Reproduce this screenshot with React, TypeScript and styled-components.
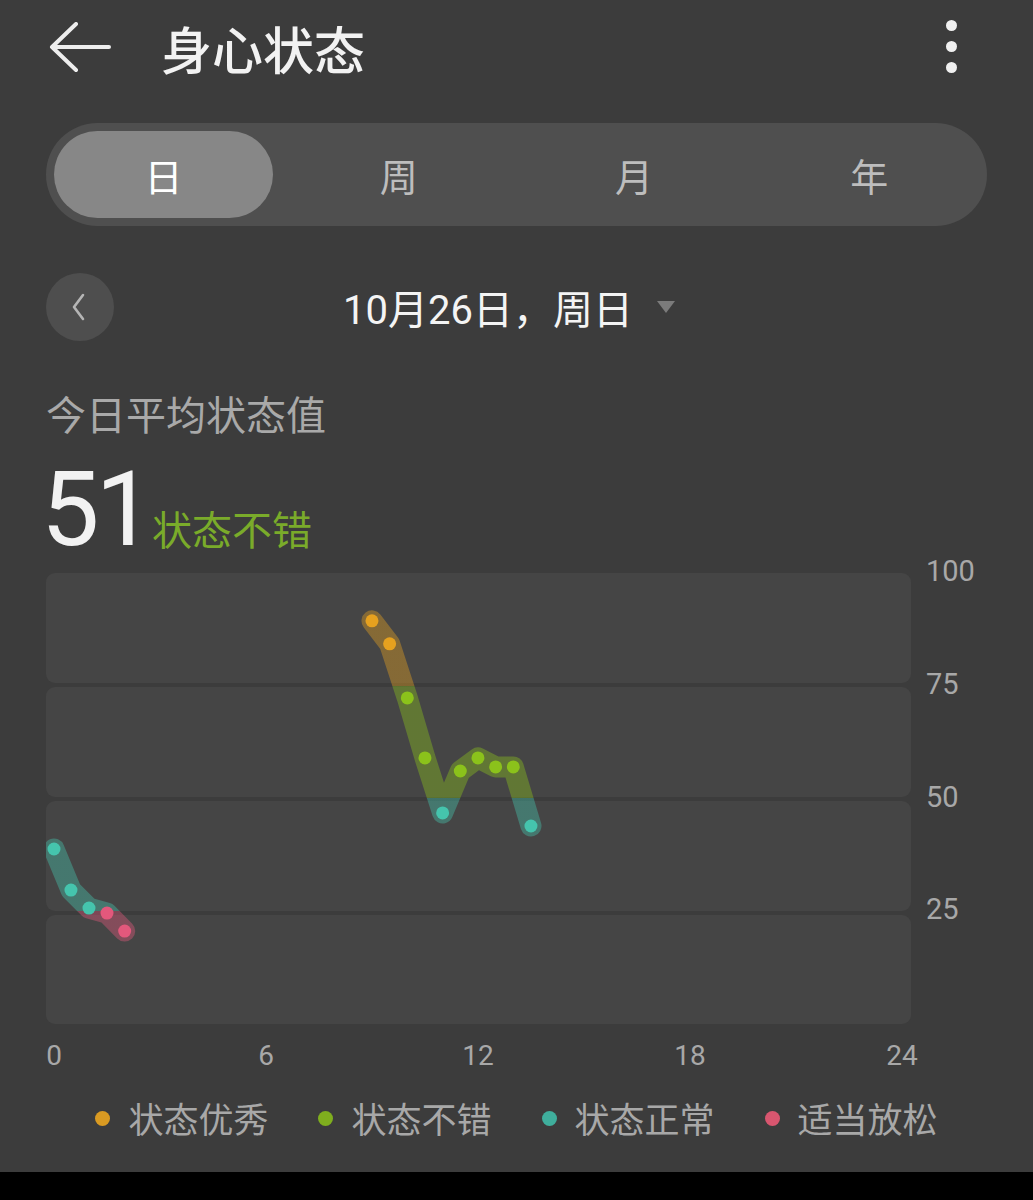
import React from "react";
import styled, { createGlobalStyle } from "styled-components";

type Point = [number, number];

const GlobalStyle = createGlobalStyle`
  html, body {
    margin: 0;
    padding: 0;
    background: #000;
  }
`;

const tabs = ["日", "周", "月", "年"];

const legend = [
  { label: "状态优秀", color: "#d99a22" },
  { label: "状态不错", color: "#7fae1e" },
  { label: "状态正常", color: "#3fae9c" },
  { label: "适当放松", color: "#d8566f" },
];

const dotColors = ["#e6a11f", "#8bc21b", "#45c4ad", "#e3587c"];

const morning: Point[] = [
  [0, 38.8],
  [0.48, 29.7],
  [0.99, 25.7],
  [1.5, 24.6],
  [2.0, 20.6],
];

const noon: Point[] = [
  [9, 89.4],
  [9.5, 84.3],
  [10, 72.3],
  [10.5, 59],
  [11, 46.8],
  [11.5, 56.1],
  [12, 59],
  [12.5, 57],
  [13, 57],
  [13.5, 43.9],
];

const W = 865;
const H = 451;
const toX = (h: number) => 8 + h * 35.33;
const toY = (v: number) => (100 - v) * (H / 100);

const colorFor = (v: number) => {
  if (v >= 75) return dotColors[0];
  if (v >= 50) return dotColors[1];
  if (v >= 25) return dotColors[2];
  return dotColors[3];
};

const pathOf = (pts: Point[]) =>
  pts.map(([h, v], i) => `${i ? "L" : "M"}${toX(h).toFixed(1)} ${toY(v).toFixed(1)}`).join(" ");

const bands = [0, 1, 2, 3].map((i) => ({ y: i * 114, h: i === 3 ? H - 342 : 110 }));

const Chart = () => (
  <svg width={W} height={H} viewBox={`0 0 ${W} ${H}`}>
    <defs>
      <linearGradient id="lvl" gradientUnits="userSpaceOnUse" x1="0" y1="0" x2="0" y2={H}>
        <stop offset="0.25" stopColor={dotColors[0]} />
        <stop offset="0.25" stopColor={dotColors[1]} />
        <stop offset="0.5" stopColor={dotColors[1]} />
        <stop offset="0.5" stopColor={dotColors[2]} />
        <stop offset="0.75" stopColor={dotColors[2]} />
        <stop offset="0.75" stopColor={dotColors[3]} />
      </linearGradient>
    </defs>
    {bands.map((b) => (
      <rect key={b.y} x={0} y={b.y} width={W} height={b.h} rx={9} fill="#454545" />
    ))}
    {[morning, noon].map((seg, i) => (
      <g key={i}>
        <path
          d={pathOf(seg)}
          fill="none"
          stroke="url(#lvl)"
          strokeOpacity={0.4}
          strokeWidth={21}
          strokeLinecap="round"
          strokeLinejoin="round"
        />
        {seg.map(([h, v]) => (
          <circle key={h} cx={toX(h)} cy={toY(v)} r={6.5} fill={colorFor(v)} />
        ))}
      </g>
    ))}
  </svg>
);

const App: React.FC = () => (
  <Page>
    <GlobalStyle />
    <Header>
      <svg width="62" height="52" viewBox="0 0 62 52">
        <path d="M60 25 H3 M27 2 L3 25 L27 48" fill="none" stroke="#eeeeee" strokeWidth="4" strokeLinecap="round" strokeLinejoin="round" />
      </svg>
      <Title>身心状态</Title>
      <More>
        <i />
        <i />
        <i />
      </More>
    </Header>

    <Segmented>
      {tabs.map((t, i) => (
        <Tab key={t}>
          <TabPill $active={i === 0}>{t}</TabPill>
        </Tab>
      ))}
    </Segmented>

    <DateRow>
      <RoundButton>
        <svg width="20" height="30" viewBox="0 0 20 30">
          <path d="M14 3 L5 15 L14 27" fill="none" stroke="#b5b5b5" strokeWidth="2.6" strokeLinecap="round" strokeLinejoin="round" />
        </svg>
      </RoundButton>
      <DateText>10月26日，周日</DateText>
      <Caret />
    </DateRow>

    <Caption>今日平均状态值</Caption>
    <ScoreRow>
      <Score>51</Score>
      <ScoreLabel>状态不错</ScoreLabel>
    </ScoreRow>

    <ChartGrid>
      <Chart />
      <YAxis>
        {["100", "75", "50", "25"].map((t) => (
          <YTick key={t}>
            <span>{t}</span>
          </YTick>
        ))}
      </YAxis>
      <XAxis>
        {["0", "6", "12", "18", "24"].map((t) => (
          <XTick key={t}>{t}</XTick>
        ))}
      </XAxis>
    </ChartGrid>

    <Legend>
      {legend.map((l) => (
        <LegendItem key={l.label}>
          <LegendDot $color={l.color} />
          {l.label}
        </LegendItem>
      ))}
    </Legend>
  </Page>
);

const Page = styled.div`
  width: 1033px;
  height: 1172px;
  box-sizing: border-box;
  padding: 0 46px;
  background: #3c3c3c;
  display: flex;
  flex-direction: column;
  font-family: Roboto, "Noto Sans CJK SC", sans-serif;
  overflow: hidden;
`;

const Header = styled.div`
  height: 96px;
  display: flex;
  align-items: center;
  padding-left: 3px;
`;

const Title = styled.h1`
  margin: 0 0 0 50px;
  font-size: 51px;
  font-weight: 500;
  color: #f2f2f2;
  font-family: "Noto Sans CJK SC", sans-serif;
  line-height: 1;
`;

const More = styled.div`
  margin-left: auto;
  margin-right: 30px;
  display: flex;
  flex-direction: column;
  gap: 10px;
  margin-top: -4px;

  i {
    width: 11px;
    height: 11px;
    border-radius: 50%;
    background: #f0f0f0;
  }
`;

const Segmented = styled.div`
  margin-top: 27px;
  height: 103px;
  border-radius: 52px;
  background: #4f4f4f;
  display: grid;
  grid-template-columns: repeat(4, 1fr);
`;

const Tab = styled.div`
  padding: 8px;
  display: flex;
`;

const TabPill = styled.div<{ $active?: boolean }>`
  flex: 1;
  border-radius: 44px;
  display: flex;
  align-items: center;
  justify-content: center;
  font-family: "Noto Sans CJK SC", sans-serif;
  font-size: 38px;
  color: ${(p) => (p.$active ? "#ffffff" : "#bdbdbd")};
  background: ${(p) => (p.$active ? "#878787" : "transparent")};
`;

const DateRow = styled.div`
  margin-top: 47px;
  height: 68px;
  display: flex;
  align-items: center;
`;

const RoundButton = styled.div`
  width: 68px;
  height: 68px;
  border-radius: 50%;
  background: #4e4e4e;
  display: flex;
  align-items: center;
  justify-content: center;
  padding-right: 2px;
  box-sizing: border-box;
`;

const DateText = styled.div`
  margin-left: 229px;
  font-size: 40px;
  color: #f4f4f4;
`;

const Caret = styled.div`
  margin-left: 24px;
  width: 0;
  height: 0;
  border-left: 9px solid transparent;
  border-right: 9px solid transparent;
  border-top: 12px solid #7b7b7b;
`;

const Caption = styled.div`
  margin-top: 47px;
  line-height: 50px;
  font-size: 40px;
  color: #a9a9a9;
  font-family: "Noto Sans CJK SC", sans-serif;
`;

const ScoreRow = styled.div`
  margin-top: 20px;
  display: flex;
  align-items: baseline;
  height: 104px;
`;

const Score = styled.span`
  font-size: 104px;
  line-height: 104px;
  color: #f2f2f2;
  letter-spacing: -4px;
  margin-left: -5px;
`;

const ScoreLabel = styled.span`
  margin-left: 2px;
  font-size: 40px;
  color: #7aab2a;
  font-family: "Noto Sans CJK SC", sans-serif;
`;

const ChartGrid = styled.div`
  margin-top: 11px;
  display: grid;
  grid-template-columns: 865px 1fr;
  grid-template-rows: 451px auto;
`;

const YAxis = styled.div`
  display: flex;
  flex-direction: column;
  padding-left: 15px;
`;

const YTick = styled.div`
  height: 112.75px;
  font-size: 29px;
  color: #a8a8a8;

  span {
    display: block;
    line-height: 30px;
    margin-top: -17px;
  }
`;

const XAxis = styled.div`
  grid-column: 1;
  margin: 17px 0 0 8px;
  width: 848px;
  display: flex;
  justify-content: space-between;
`;

const XTick = styled.div`
  width: 0;
  display: flex;
  justify-content: center;
  white-space: nowrap;
  font-size: 28px;
  line-height: 30px;
  color: #a8a8a8;
`;

const Legend = styled.div`
  margin-top: 22px;
  display: flex;
  justify-content: center;
  gap: 50px;
`;

const LegendItem = styled.div`
  display: flex;
  align-items: center;
  gap: 18px;
  font-family: "Noto Sans CJK SC", sans-serif;
  font-size: 35px;
  line-height: 50px;
  color: #a8a8a8;
`;

const LegendDot = styled.span<{ $color: string }>`
  width: 15px;
  height: 15px;
  border-radius: 50%;
  background: ${(p) => p.$color};
`;

export default App;
